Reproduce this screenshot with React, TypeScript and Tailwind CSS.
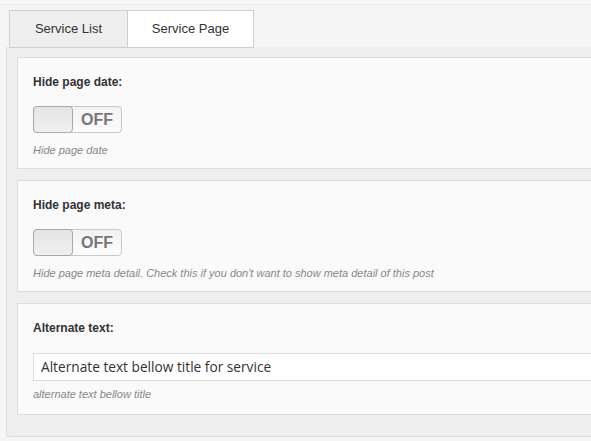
import React from "react";

function Toggle() {
  return (
    <div className="mt-[17px] flex h-[27px] w-[89px] items-stretch rounded-[4px] border border-[#c8c8c8] bg-gradient-to-b from-[#f2f2f2] to-[#fcfcfc]">
      <div className="-my-px -ml-px w-[40px] rounded-[4px] border border-[#a9a9a9] bg-gradient-to-b from-[#e4e4e4] to-[#f0f0f0]" />
      <div className="flex flex-1 items-center justify-center text-[16px] font-bold leading-none text-[#777]">
        OFF
      </div>
    </div>
  );
}

function Title({ children }: { children: React.ReactNode }) {
  return <div className="text-[12px] font-bold leading-[14px] text-[#333]">{children}</div>;
}

function Desc({ children, className = "" }: { children: React.ReactNode; className?: string }) {
  return <div className={`text-[11px] italic leading-[13px] text-[#888] ${className}`}>{children}</div>;
}

function TogglePanel({ title, desc }: { title: string; desc: string }) {
  return (
    <div className="h-[112px] border border-[#dcdcdc] bg-[#fafafa] pl-[15px] pt-[17px]">
      <Title>{title}</Title>
      <Toggle />
      <Desc className="mt-[11px]">{desc}</Desc>
    </div>
  );
}

export default function App() {
  return (
    <div
      className="relative h-[441px] w-[591px] overflow-hidden bg-[#f5f5f5]"
      style={{ fontFamily: '"Liberation Sans", Arial, sans-serif' }}
    >
      <div className="h-[5px] border-b border-[#ebebeb] bg-[#f8f8f8]" />
      <div className="w-[640px]">
        <div className="flex pl-[9px] pt-[5px]">
          <div className="flex h-[38px] w-[119px] items-center justify-center border border-[#cfcfcf] bg-[#eeeeee] text-[13px] text-[#333]">
            Service List
          </div>
          <div className="flex h-[38px] w-[126px] items-center justify-center border border-l-0 border-[#cfcfcf] bg-white text-[13px] text-[#333]">
            Service Page
          </div>
        </div>
        <div className="-mt-px ml-[6px] flex flex-col gap-[11px] rounded-bl-[3px] border-b border-l border-[#dcdcdc] bg-[#efefef] pb-[21px] pl-[10px] pt-[10px]">
          <TogglePanel title="Hide page date:" desc="Hide page date" />
          <TogglePanel
            title="Hide page meta:"
            desc="Hide page meta detail. Check this if you don't want to show meta detail of this post"
          />
          <div className="h-[112px] border border-[#dcdcdc] bg-[#fafafa] pl-[15px] pt-[17px]">
            <Title>Alternate text:</Title>
            <div
              className="mt-[18px] flex h-[28px] items-center border border-[#dddddd] bg-white pl-[7px] text-[13.7px] text-[#333]"
              style={{ fontFamily: '"Open Sans", "Liberation Sans", sans-serif' }}
            >
              Alternate text bellow title for service
            </div>
            <Desc className="mt-[7px]">alternate text bellow title</Desc>
          </div>
        </div>
      </div>
    </div>
  );
}
